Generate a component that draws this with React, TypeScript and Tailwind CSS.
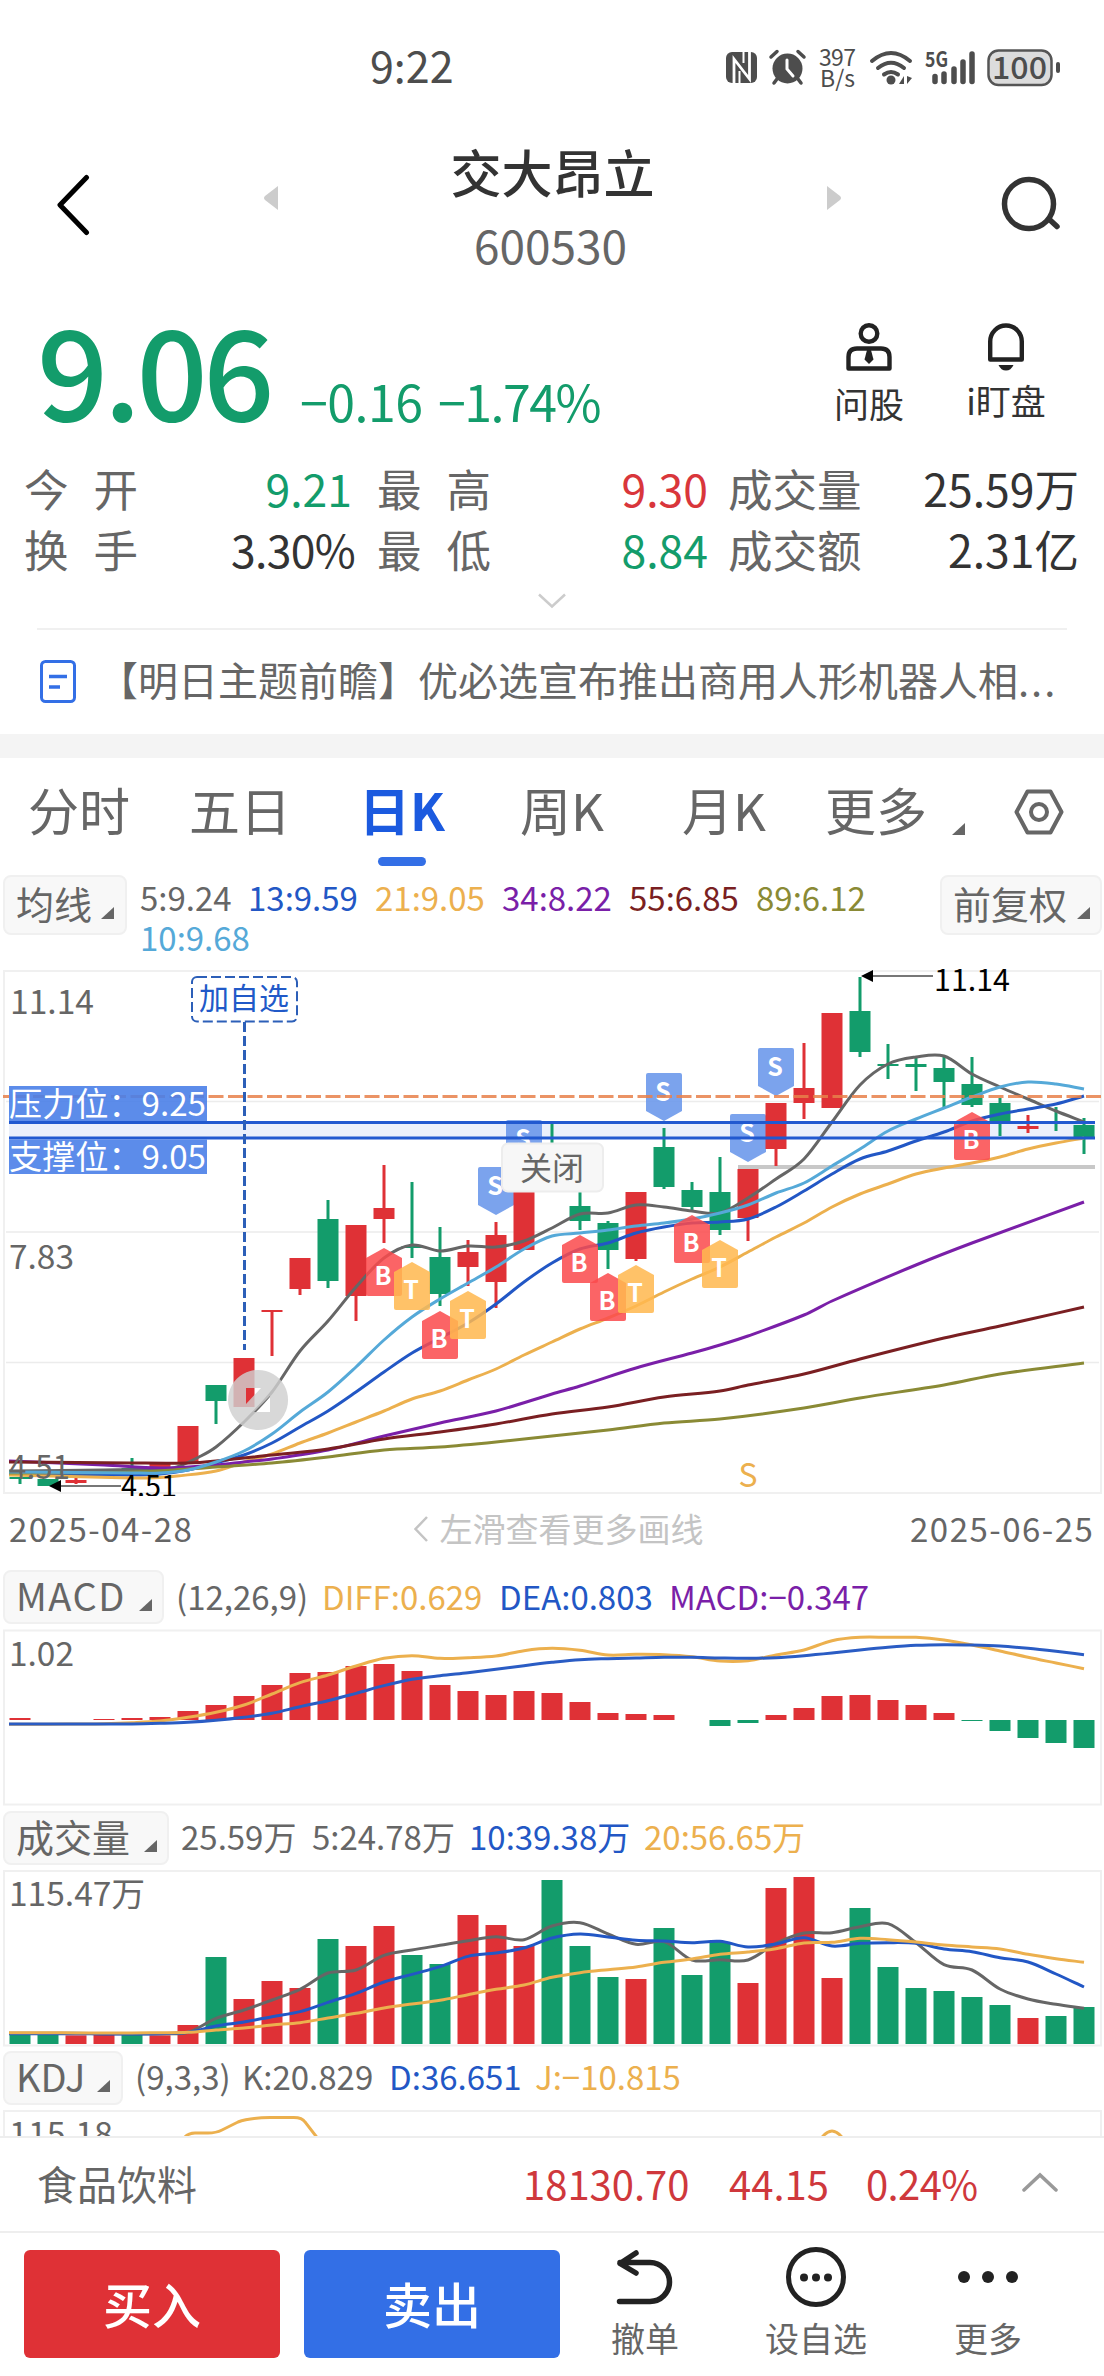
import type { ReactNode } from 'react';

const RED = '#df3136';
const GREEN = '#139c6b';

type Pt = [number, number];

// candle columns are 28px apart, first one centered on x=20
const cx = (i: number) => 20 + i * 28;

// [high, bodyTop, bodyBottom, low, up(1) / down(0)]
const candles: [number, number, number, number, number][] = [
  [1477, 1477, 1479, 1484, 0],
  [1479, 1479, 1486, 1486, 0],
  [1478, 1480, 1483, 1484, 1],
  [1476, 1476, 1478, 1478, 1],
  [1458, 1468, 1470, 1474, 0],
  [1464, 1464, 1468, 1468, 1],
  [1426, 1426, 1464, 1464, 1],
  [1385, 1385, 1401, 1424, 0],
  [1358, 1358, 1407, 1407, 1],
  [1310, 1310, 1312, 1356, 1],
  [1258, 1258, 1289, 1295, 1],
  [1200, 1219, 1281, 1288, 0],
  [1225, 1225, 1296, 1321, 1],
  [1165, 1208, 1219, 1243, 1],
  [1182, 1246, 1248, 1258, 0],
  [1227, 1257, 1294, 1306, 0],
  [1240, 1252, 1267, 1286, 1],
  [1222, 1235, 1282, 1308, 1],
  [1190, 1190, 1250, 1250, 1],
  [1123, 1144, 1146, 1150, 0],
  [1190, 1206, 1221, 1230, 0],
  [1221, 1223, 1250, 1269, 0],
  [1192, 1192, 1259, 1261, 1],
  [1128, 1147, 1187, 1189, 0],
  [1182, 1190, 1207, 1210, 0],
  [1157, 1192, 1230, 1235, 0],
  [1169, 1169, 1218, 1241, 1],
  [1103, 1103, 1149, 1166, 1],
  [1043, 1088, 1103, 1119, 1],
  [1013, 1013, 1108, 1108, 1],
  [977, 1011, 1052, 1057, 0],
  [1044, 1064, 1066, 1079, 0],
  [1057, 1064, 1067, 1091, 0],
  [1057, 1068, 1082, 1107, 0],
  [1057, 1084, 1105, 1107, 0],
  [1098, 1103, 1122, 1136, 0],
  [1115, 1126, 1129, 1133, 1],
  [1107, 1123, 1124, 1131, 0],
  [1118, 1125, 1138, 1154, 0],
];

const ma5: Pt[] = [
  [9, 1471], [104, 1470], [160, 1469], [177, 1467], [199, 1457], [216, 1447], [244, 1422], [272, 1392], [300, 1351],
  [328, 1321], [356, 1287], [384, 1258], [412, 1245], [440, 1251], [468, 1246], [496, 1247], [524, 1241], [552, 1228],
  [580, 1214], [608, 1213], [636, 1205], [664, 1207], [692, 1211], [720, 1213], [748, 1198], [776, 1179], [804, 1159],
  [832, 1122], [860, 1085], [888, 1064], [916, 1057], [944, 1056], [972, 1074], [1000, 1087], [1028, 1099], [1056, 1111], [1084, 1122],
];
const ma10: Pt[] = [
  [9, 1472], [132, 1473], [160, 1473], [188, 1470], [216, 1462], [244, 1451], [272, 1434], [300, 1412], [328, 1392],
  [356, 1367], [384, 1340], [412, 1317], [440, 1299], [468, 1283], [496, 1267], [524, 1249], [552, 1236], [580, 1233],
  [608, 1230], [636, 1226], [664, 1223], [692, 1219], [720, 1213], [748, 1205], [776, 1193], [804, 1183], [832, 1166],
  [860, 1149], [888, 1131], [916, 1119], [944, 1108], [972, 1097], [1000, 1087], [1028, 1082], [1056, 1084], [1084, 1089],
];
const ma13: Pt[] = [
  [9, 1474], [132, 1475], [160, 1474], [188, 1470], [216, 1463], [244, 1455], [272, 1443], [300, 1427], [328, 1411],
  [356, 1392], [384, 1372], [412, 1353], [440, 1338], [468, 1323], [496, 1304], [524, 1282], [552, 1263], [580, 1249],
  [608, 1243], [636, 1233], [664, 1227], [692, 1223], [720, 1222], [748, 1219], [776, 1207], [804, 1191], [832, 1174],
  [860, 1159], [888, 1151], [916, 1141], [944, 1132], [972, 1121], [1000, 1114], [1028, 1109], [1056, 1104], [1084, 1096],
];
const ma21: Pt[] = [
  [9, 1475], [132, 1478], [160, 1477.5], [177, 1476], [216, 1471], [244, 1462], [272, 1454], [300, 1443], [328, 1433],
  [356, 1422], [384, 1411], [412, 1399], [440, 1391], [468, 1380], [496, 1369], [524, 1355], [552, 1342], [580, 1329],
  [608, 1318], [636, 1306], [664, 1292], [692, 1279], [720, 1267], [748, 1252], [776, 1237], [804, 1223], [832, 1207],
  [860, 1194], [888, 1184], [916, 1174], [944, 1168], [972, 1163], [1000, 1157], [1028, 1149], [1056, 1143], [1084, 1138],
];
const ma34: Pt[] = [
  [9, 1461], [104, 1465], [160, 1468], [216, 1465], [244, 1462], [272, 1459], [328, 1450], [384, 1436], [440, 1423],
  [496, 1411], [552, 1394], [580, 1386], [636, 1368], [692, 1353], [720, 1345], [748, 1336], [804, 1315], [832, 1301],
  [916, 1265], [972, 1243], [1084, 1202],
];
const ma55: Pt[] = [
  [9, 1462], [132, 1463], [188, 1463], [216, 1461], [272, 1455], [328, 1449], [384, 1439], [440, 1432], [496, 1424],
  [552, 1414], [608, 1407], [664, 1397], [720, 1391], [748, 1385], [804, 1374], [860, 1359], [944, 1338], [1000, 1326], [1084, 1307],
];
const ma89: Pt[] = [
  [9, 1473], [132, 1472], [188, 1469], [216, 1467], [272, 1463], [328, 1457], [384, 1450], [440, 1447], [496, 1442],
  [552, 1436], [608, 1430], [664, 1423], [720, 1419], [804, 1408], [860, 1398], [944, 1385], [1000, 1374], [1084, 1363],
];

const signals: { type: 'S' | 'B' | 'T'; i: number; y: number }[] = [
  { type: 'S', i: 18, y: 1120 },
  { type: 'S', i: 17, y: 1167 },
  { type: 'S', i: 23, y: 1073 },
  { type: 'S', i: 27, y: 1048 },
  { type: 'S', i: 26, y: 1114 },
  { type: 'B', i: 13, y: 1248 },
  { type: 'T', i: 14, y: 1262 },
  { type: 'B', i: 15, y: 1311 },
  { type: 'T', i: 16, y: 1291 },
  { type: 'B', i: 20, y: 1235 },
  { type: 'B', i: 21, y: 1273 },
  { type: 'T', i: 22, y: 1265 },
  { type: 'B', i: 24, y: 1215 },
  { type: 'T', i: 25, y: 1240 },
  { type: 'B', i: 34, y: 1112 },
];

const macdBars = [
  2, 0, 0, 1, 2, 3, 9, 15, 24, 35, 47, 48, 54, 56, 49, 35, 29, 25, 29, 27, 18, 7, 6, 5, 0, -6, -3, 5, 12, 24, 25, 20, 15,
  7, -1, -11, -18, -23, -28,
];
const diff = [
  523, 523, 522, 521, 518, 513, 502, 487, 465, 432, 398, 375, 348, 325, 317, 325, 323, 318, 302, 295, 301, 315, 313, 314,
  320, 333, 332, 315, 300, 272, 262, 262, 262, 270, 285, 303, 322, 339, 356,
];
const dea = [
  522, 522, 522, 522, 522, 520, 517, 511, 502, 490, 470, 452, 430, 407, 388, 377, 368, 358, 347, 337, 329, 326, 324, 322,
  322, 324, 325, 323, 317, 309, 300, 292, 286, 284, 285, 288, 295, 304, 314,
];

const volTops = [
  703, 703, 706, 703, 703, 706, 675, 471, 597, 543, 564, 417, 438, 378, 465, 492, 345, 375, 438, 240, 438, 531, 537, 384,
  525, 426, 549, 264, 231, 534, 324, 501, 564, 573, 591, 615, 654, 648, 621,
];
const volColors = 'ggrrgrrgrrrgrrggrrrgggrgggrrrrggggggrgg';
const vol5 = [
  700, 700, 700, 701, 701, 701, 697, 655, 630, 600, 568, 519, 510, 466, 450, 436, 422, 410, 419, 378, 368, 402, 433, 425,
  480, 479, 480, 430, 399, 398, 380, 371, 428, 494, 510, 567, 597, 613, 625,
];
const vol10 = [
  701, 701, 701, 702, 702, 701, 697, 678, 666, 650, 635, 607, 580, 546, 523, 500, 469, 459, 444, 414, 402, 411, 421, 423,
  428, 424, 441, 432, 413, 438, 430, 428, 430, 447, 455, 473, 486, 522, 561,
];
const vol20 = [
  698, 698, 699, 699, 699, 698, 697, 690, 684, 675, 668, 654, 640, 624, 612, 601, 584, 568, 555, 532, 518, 509, 501, 487,
  477, 463, 456, 446, 429, 427, 415, 419, 426, 435, 441, 447, 463, 476, 487,
];

const series = (values: number[], top: number): Pt[] => [
  [9, top + values[0] / 3],
  ...values.map((v, i): Pt => [cx(i), top + v / 3]),
];

// soft curve through every point
function curve(pts: Pt[]) {
  let d = `M${pts[0][0]} ${pts[0][1]}`;
  for (let i = 0; i < pts.length - 1; i++) {
    const p0 = pts[i - 1] ?? pts[i];
    const p1 = pts[i];
    const p2 = pts[i + 1];
    const p3 = pts[i + 2] ?? p2;
    const dx = (p2[0] - p1[0]) / 3;
    const s1 = (p2[1] - p0[1]) / (p2[0] - p0[0]);
    const s2 = (p3[1] - p1[1]) / (p3[0] - p1[0]);
    d += `C${p1[0] + dx} ${p1[1] + s1 * dx} ${p2[0] - dx} ${p2[1] - s2 * dx} ${p2[0]} ${p2[1]}`;
  }
  return d;
}

function Line({ pts, color, width = 3 }: { pts: Pt[]; color: string; width?: number }) {
  return <path d={curve(pts)} fill="none" stroke={color} strokeWidth={width} />;
}

function Label({ x, y, w, size = 33, fill = '#666', children }: {
  x: number; y: number; w: number; size?: number; fill?: string; children: string;
}) {
  return (
    <text x={x} y={y} fontSize={size} fill={fill} textLength={w} lengthAdjust="spacingAndGlyphs">
      {children}
    </text>
  );
}

function Signal({ type, x, y }: { type: 'S' | 'B' | 'T'; x: number; y: number }) {
  const fill = type === 'S' ? '#6594ea' : type === 'B' ? '#fa4a4d' : '#ffb84f';
  const d =
    type === 'S'
      ? `M${x - 16} ${y}h32q2 0 2 2v36l-18 10l-18-10v-36q0-2 2-2z`
      : `M${x} ${y}l18 10v36q0 2-2 2h-32q-2 0-2-2v-36z`;
  return (
    <g>
      <path d={d} fill={fill} fillOpacity={0.86} />
      <text x={x - 1} y={type === 'S' ? y + 28 : y + 37} fontSize={25} fontWeight={700} fill="#fff" textAnchor="middle">
        {type}
      </text>
    </g>
  );
}

function Corner() {
  return (
    <svg viewBox="0 0 13 12" className="h-3 w-[13px] shrink-0">
      <path d="M13 0V12H0z" fill="#666" />
    </svg>
  );
}

function Picker({ className, children }: { className: string; children: ReactNode }) {
  return (
    <button
      className={`flex shrink-0 items-center justify-between rounded-lg border-2 border-[#f0f0f0] bg-[#f8f8f8] pl-[11px] text-[38px] leading-none text-[#666] ${className}`}
    >
      <span className="-mt-1 whitespace-nowrap">{children}</span>
      <span className="mt-4">
        <Corner />
      </span>
    </button>
  );
}

function StatusBar() {
  return (
    <div className="flex h-[108px] items-start justify-between pl-[370px] pr-[34px] text-[#4d4d4d]">
      <span className="mt-[43px] text-[43px] leading-none">9:22</span>
      <svg viewBox="720 40 350 60" className="mt-10 h-[60px] w-[350px]" fill="#4d4d4d">
        <rect x="726" y="52" width="31" height="31" rx="6" />
        <path d="M734 84V59l15.500 20V51" fill="none" stroke="#fff" strokeWidth="2.800" />
        <path d="M739.500 71v13M743.500 51v12" fill="none" stroke="#fff" strokeWidth="2" />
        <circle cx="787.500" cy="68.500" r="15" />
        <path d="M771 57l6-5.500M804 57l-6-5.500M777 79l-3 4M798 79l3 4" stroke="#4d4d4d" strokeWidth="3.500" strokeLinecap="round" />
        <path d="M787 60v9l6 7" fill="none" stroke="#fff" strokeWidth="3" strokeLinecap="round" />
        <text x="819" y="66" fontSize="23" textLength="37">397</text>
        <text x="820" y="87" fontSize="23" textLength="35">B/s</text>
        <g fill="none" stroke="#4d4d4d" strokeWidth="4" strokeLinecap="round">
          <path d="M872 61q19-16 38 0M878 68q13-10.500 26 0M884 74.500q7-5 14 0" />
        </g>
        <circle cx="891" cy="80" r="4.500" />
        <path d="M904 76v8h-5zM907 76v8l5-6z" />
        <text x="925" y="67" fontSize="21" fontWeight="700" textLength="23" lengthAdjust="spacingAndGlyphs">5G</text>
        <path
          d="M935 76.500v5M944 74v7.500M954 69v12.500M963 62v19.500M972 54v27.500"
          stroke="#4d4d4d"
          strokeWidth="5.500"
          strokeLinecap="round"
        />
        <rect x="988.500" y="50.500" width="63" height="34.500" rx="10" fill="#dcdcdc" stroke="#555" strokeWidth="2.500" />
        <rect x="1056" y="62" width="4" height="11" rx="2" />
        <text x="992" y="79" fontSize="31" fontWeight="500" textLength="55" lengthAdjust="spacingAndGlyphs">100</text>
      </svg>
    </div>
  );
}

function Header() {
  return (
    <header className="flex h-[202px] items-start pl-[54px] pr-[42px]">
      <svg viewBox="0 0 36 62" className="mt-[66px] h-[62px] w-9">
        <path d="M32.500 3.500L6 31l26.500 27.500" fill="none" stroke="#000" strokeWidth="5" strokeLinecap="round" strokeLinejoin="round" />
      </svg>
      <svg viewBox="0 0 14 24" className="ml-[174px] mt-[78px] h-6 w-3.5">
        <path d="M14 0V24L1 14q-2-2 0-4z" fill="#ccc" />
      </svg>
      <div className="flex w-[549px] flex-col items-center">
        <h1 className="mt-[38px] text-[51px] font-medium leading-none text-[#333]">交大昂立</h1>
        <p className="mr-1 mt-[24px] text-[46px] leading-none text-[#666]">600530</p>
      </div>
      <svg viewBox="0 0 14 24" className="mt-[78px] h-6 w-3.5">
        <path d="M0 0V24L13 14q2-2 0-4z" fill="#ccc" />
      </svg>
      <svg viewBox="0 0 62 58" className="ml-auto mt-[68px] h-[58px] w-[62px]" fill="none" stroke="#333" strokeWidth="5.500" strokeLinecap="round">
        <circle cx="29" cy="28" r="24.500" />
        <path d="M50 44l7 6.500" />
      </svg>
    </header>
  );
}

function Price() {
  return (
    <section className="flex h-[148px] text-[#139c6b]">
      <span className="ml-[37px] mt-[-6px] w-[244px] text-[125px] font-medium leading-none tracking-[-4.500px]">9.06</span>
      <span className="ml-[19px] mt-[65px] w-[138px] whitespace-nowrap text-[50px] leading-none tracking-[-0.5px]">−0.16</span>
      <span className="mt-[65px] whitespace-nowrap text-[50px] leading-none tracking-[-1.500px]">−1.74%</span>
      <div className="ml-auto flex pr-[57px] text-[#333]">
        <div className="flex w-[70px] flex-col items-center">
          <svg viewBox="0 0 46 48" className="mt-[13px] h-12 w-[46px]" fill="none" stroke="#222" strokeWidth="4.400">
            <circle cx="23" cy="10.500" r="8.300" />
            <path d="M2.500 45.500V34q0-8.500 8.500-8.500h24q8.500 0 8.500 8.500v11.500z" strokeLinejoin="round" />
            <path d="M21 27h4l2.500 9.500L23 41l-4.500-4.500z" fill="#222" stroke="none" />
          </svg>
          <span className="mt-[14px] text-[35px] leading-none">问股</span>
        </div>
        <div className="ml-[61px] flex w-[82px] flex-col items-center">
          <svg viewBox="0 0 38 48" className="mt-[13px] h-12 w-[38px]" fill="none" stroke="#222" strokeWidth="4.400" strokeLinejoin="round">
            <path d="M3.200 36.500V18.500a15.800 16 0 0 1 31.600 0v18z" />
            <path d="M11.500 42h15q-2.500 5.500-7.500 5.500t-7.500-5.500z" fill="#222" stroke="none" />
          </svg>
          <span className="mt-[11px] whitespace-nowrap text-[35px] leading-none">i盯盘</span>
        </div>
      </div>
    </section>
  );
}

const quotes = [
  ['今', '开', '9.21', 'text-[#139c6b] pr-[3px]', '最', '高', '9.30', 'text-[#d9363b]', '成交量', '25.59万'],
  ['换', '手', '3.30%', 'text-[#333] tracking-[-0.700px]', '最', '低', '8.84', 'text-[#139c6b]', '成交额', '2.31亿'],
];

function Quotes() {
  return (
    <section className="h-[170px]">
      <div>
        {quotes.map(q => (
          <div key={q[2]} className="flex h-[61px] items-center pl-6 pr-[25px] text-[44.500px] leading-none text-[#666]">
            <span className="flex w-[114px] justify-between"><i className="not-italic">{q[0]}</i><i className="not-italic">{q[1]}</i></span>
            <span className={`w-[217px] text-right ${q[3]}`}>{q[2]}</span>
            <span className="ml-[22px] flex w-[114px] justify-between"><i className="not-italic">{q[4]}</i><i className="not-italic">{q[5]}</i></span>
            <span className={`w-[217px] text-right ${q[7]}`}>{q[6]}</span>
            <span className="ml-5">{q[8]}</span>
            <span className="ml-auto text-[#333]">{q[9]}</span>
          </div>
        ))}
      </div>
      <svg viewBox="0 0 28 16" className="mx-auto mt-[13px] h-4 w-7">
        <path d="M1 1.500l13 12l13-12" fill="none" stroke="#ccc" strokeWidth="2.500" />
      </svg>
    </section>
  );
}

function News() {
  return (
    <section className="h-[106px] px-[37px]">
      <div className="flex h-full items-center border-t-2 border-[#f0f0f0]">
        <svg viewBox="0 0 36 43" className="ml-[3px] mt-[-1px] h-[43px] w-9 shrink-0" fill="none" stroke="#336fe6" strokeWidth="3">
          <rect x="1.500" y="1.500" width="33" height="40" rx="4" />
          <path d="M9 16.500h18M9 27h11" strokeWidth="3.500" />
        </svg>
        <p className="ml-[22px] mt-[-6px] whitespace-nowrap text-[40px] leading-none text-[#666]">
          【明日主题前瞻】优必选宣布推出商用人形机器人相
          <span className="tracking-[2px]">...</span>
        </p>
      </div>
    </section>
  );
}

function Tabs() {
  return (
    <nav className="flex h-[115px] text-[51px] leading-none text-[#666]">
      <span className="ml-[28px] mt-[26px] w-[161px]">分时</span>
      <span className="mt-[26px] w-[170px]">五日</span>
      <span className="flex w-[161px] flex-col text-[#1b5adf]">
        <b className="mt-[26px] font-bold">日K</b>
        <i className="ml-[19px] mt-[22px] h-[9px] w-12 rounded-full bg-[#336fe6]" />
      </span>
      <span className="mt-[26px] w-[162px]">周K</span>
      <span className="mt-[26px] w-[143px]">月K</span>
      <span className="mt-[26px] w-[127px]">更多</span>
      <span className="mt-[65px]"><Corner /></span>
      <svg viewBox="0 0 50 46" className="ml-[49px] mt-[31px] h-[46px] w-[50px]" fill="none" stroke="#666" strokeWidth="4">
        <path d="M13.500 2.500h23L47.500 23l-11 20.500h-23L2.500 23z" strokeLinejoin="round" />
        <circle cx="25" cy="23" r="8" />
      </svg>
    </nav>
  );
}

function KLine() {
  return (
    <svg viewBox="0 966 1104 530" className="block h-[530px] w-[1104px]">
      <rect x="4" y="971" width="1097" height="522" fill="#fff" stroke="#f0f0f0" strokeWidth="2" />
      <path d="M6 1101.500H1099M6 1232H1099M6 1362.500H1099" stroke="#ececec" strokeWidth="1.500" />
      <rect x="9" y="1122" width="1086" height="16" fill="#ebf0fb" />
      <rect x="738" y="1165" width="357" height="4" fill="#c8c8c8" />
      {signals.filter(s => s.type === 'S').map(s => (
        <Signal key={s.i} type={s.type} x={cx(s.i)} y={s.y} />
      ))}
      {candles.map(([hi, top, bottom, lo, up], i) => (
        <g key={i} fill={up ? RED : GREEN}>
          <rect x={cx(i) - 1.5} y={hi} width="3" height={lo - hi} />
          <rect x={cx(i) - 10.5} y={top} width="21" height={bottom - top} />
        </g>
      ))}
      <Line pts={ma5} color="#666" />
      <Line pts={ma13} color="#2257c5" />
      <Line pts={ma21} color="#ecb04e" />
      <Line pts={ma34} color="#7a1fa8" />
      <Line pts={ma55} color="#7a1f22" />
      <Line pts={ma89} color="#8a8a35" />
      <Line pts={ma10} color="#55a9d8" />
      {signals.filter(s => s.type !== 'S').map(s => (
        <Signal key={s.i} type={s.type} x={cx(s.i)} y={s.y} />
      ))}

      <path d="M3 1096.500H1101" stroke="#e8804a" strokeOpacity="0.850" strokeWidth="3" strokeDasharray="15 4.500" strokeDashoffset="9" />
      <path d="M9 1122.500H1095M9 1138H1095" stroke="#2159d0" strokeWidth="3" />
      <rect x="9" y="1086" width="198" height="35" fill="#4a80e8" fillOpacity="0.900" />
      <rect x="9" y="1139.500" width="198" height="34.500" fill="#4a80e8" fillOpacity="0.900" />
      <Label x={9} y={1116} w={197} fill="#fff">压力位：9.25</Label>
      <Label x={9} y={1168.500} w={197} fill="#fff">支撑位：9.05</Label>

      <g fill="none" stroke="#2c5fb8">
        <rect x="192" y="977" width="105" height="44.500" rx="5" strokeWidth="2" strokeDasharray="10 4" />
        <path d="M244.500 1022V1350" strokeWidth="3" strokeDasharray="10 4" />
      </g>
      <Label x={199} y={1009} w={90} size={30} fill="#2159c8">加自选</Label>

      <Label x={10} y={1013.500} w={84}>11.14</Label>
      <Label x={9} y={1269} w={65}>7.83</Label>
      <Label x={9} y={1479} w={61}>4.51</Label>
      <path d="M872 976H933M59 1486H121" stroke="#777" strokeWidth="2" />
      <path d="M861 976l12-6v12zM49 1486l12-6v12z" fill="#000" />
      <Label x={934} y={991} w={76} size={30} fill="#000">11.14</Label>
      <Label x={121} y={1497} w={56} size={30} fill="#000">4.51</Label>
      <Label x={738.5} y={1487} w={19} fill="#ecb04e">S</Label>

      <path
        d="M258 1370a30 30 0 1 0 .1 0zM246 1388h15l-15 16zM270 1396v16h-16z"
        fill="#cfcfcf"
        fillOpacity="0.820"
        fillRule="evenodd"
      />

      <rect x="502" y="1143.500" width="101" height="48" rx="6" fill="#f7f7f7" stroke="#ededed" strokeWidth="2" />
      <Label x={520} y={1180} w={64} size={32}>关闭</Label>
    </svg>
  );
}

function Macd() {
  return (
    <svg viewBox="0 1629 1104 178" className="block h-[178px] w-[1104px]">
      <rect x="4" y="1630.500" width="1097" height="174" fill="#fff" stroke="#f0f0f0" strokeWidth="2" />
      {macdBars.map((v, i) => (
        <rect key={i} x={cx(i) - 10.5} y={v > 0 ? 1720 - v : 1720} width="21" height={Math.abs(v)} fill={v > 0 ? RED : GREEN} />
      ))}
      <Line pts={series(diff, 1550)} color="#ecb04e" />
      <Line pts={series(dea, 1550)} color="#2a5cc4" />
      <Label x={9} y={1666} w={65}>1.02</Label>
    </svg>
  );
}

function Volume() {
  return (
    <svg viewBox="0 1869 1104 178" className="block h-[178px] w-[1104px]">
      <rect x="4" y="1871" width="1097" height="174.500" fill="#fff" stroke="#f0f0f0" strokeWidth="2" />
      {volTops.map((v, i) => (
        <rect key={i} x={cx(i) - 10.5} y={1800 + v / 3} width="21" height={244 - v / 3} fill={volColors[i] === 'r' ? RED : GREEN} />
      ))}
      <Line pts={series(vol5, 1800)} color="#666" />
      <Line pts={series(vol10, 1800)} color="#2257c5" />
      <Line pts={series(vol20, 1800)} color="#ecb04e" />
      <Label x={9} y={1906} w={136}>115.47万</Label>
    </svg>
  );
}

function Kdj() {
  return (
    <svg viewBox="0 2109 1104 27" className="block h-[27px] w-[1104px]">
      <path d="M4 2140V2111H1101V2140" fill="#fff" stroke="#f0f0f0" strokeWidth="2" />
      <Label x={9} y={2146} w={104}>115.18</Label>
      <path
        d="M184 2138Q188 2133 195 2133H208Q216 2133 222 2130L238 2122Q248 2118 270 2117.500H292Q302 2117 305 2122L319 2140M820 2140Q832 2122 844 2140"
        fill="none"
        stroke="#ecb04e"
        strokeWidth="3"
      />
    </svg>
  );
}

function App() {
  return (
    <div className="h-[2376px] w-[1104px] overflow-hidden bg-white font-['Noto_Sans_CJK_SC','Noto_Sans',sans-serif]">
      <StatusBar />
      <Header />
      <Price />
      <Quotes />
      <News />
      <div className="h-[24px] bg-[#f4f4f4]" />
      <Tabs />

      <div className="flex h-[93px] items-start pl-[3px] pr-0.5 pt-0.5">
        <Picker className="h-[60px] w-[124px] pr-[11px]">均线</Picker>
        <div className="ml-[13px] mt-[2px] h-[80px] flex-1 text-[33px] leading-[40px]">
          <div className="flex whitespace-nowrap">
            <span className="w-[108px] text-[#666]">5:9.24</span>
            <span className="w-[127px] text-[#2257c5]">13:9.59</span>
            <span className="w-[127px] text-[#ecb04e]">21:9.05</span>
            <span className="w-[127px] text-[#7a1fa8]">34:8.22</span>
            <span className="w-[127px] text-[#7a1f22]">55:6.85</span>
            <span className="w-[127px] text-[#8a8a35]">89:6.12</span>
          </div>
          <span className="text-[#55a9d8]">10:9.68</span>
        </div>
        <Picker className="h-[60px] w-[162px] pr-[10px]">前复权</Picker>
      </div>

      <KLine />
      <div className="flex h-[74px] items-start justify-between px-[9px] pt-[16px] text-[33px] leading-none text-[#666]">
        <span className="w-[198px] tracking-[1.500px]">2025-04-28</span>
        <span className="flex items-center text-[#c4c4c4]">
          <svg viewBox="0 0 14 26" className="mr-3 h-[26px] w-3.5">
            <path d="M13 1L1.500 13L13 25" fill="none" stroke="#c4c4c4" strokeWidth="2.500" />
          </svg>
          左滑查看更多画线
        </span>
        <span className="w-[185px] tracking-[1.500px]">2025-06-25</span>
      </div>

      <div className="flex h-[59px] items-start pl-[3px] text-[33px]">
        <Picker className="h-[54px] w-[161px] pr-2.5 tracking-[1.500px]">MACD</Picker>
        <div className="ml-[12px] mt-[6px] flex whitespace-nowrap leading-[40px]">
          <span className="w-[146px] text-[#666]">(12,26,9)</span>
          <span className="w-[177px] text-[#ecb04e]">DIFF:0.629</span>
          <span className="w-[170px] text-[#2257c5]">DEA:0.803</span>
          <span className="text-[#7a1fa8]">MACD:−0.347</span>
        </div>
      </div>
      <Macd />

      <div className="flex h-[62px] items-start pl-[3px] pt-1 text-[33px]">
        <Picker className="h-[54px] w-[166px] pr-[10px]">成交量</Picker>
        <div className="ml-[12px] mt-[5px] flex whitespace-nowrap leading-[40px]">
          <span className="w-[131px] text-[#666]">25.59万</span>
          <span className="w-[157px] text-[#666]">5:24.78万</span>
          <span className="w-[175px] text-[#2257c5]">10:39.38万</span>
          <span className="text-[#ecb04e]">20:56.65万</span>
        </div>
      </div>
      <Volume />

      <div className="flex h-[62px] items-start pl-[3px] pt-1 text-[33px]">
        <Picker className="h-[54px] w-[120px] pr-[11px]">KDJ</Picker>
        <div className="ml-[12px] mt-[5px] flex whitespace-nowrap leading-[40px]">
          <span className="w-[107px] text-[#666]">(9,3,3)</span>
          <span className="w-[147px] text-[#666]">K:20.829</span>
          <span className="w-[146px] text-[#2257c5]">D:36.651</span>
          <span className="text-[#ecb04e]">J:−10.815</span>
        </div>
      </div>
      <Kdj />

      <div className="flex h-[95px] items-center border-t-2 border-[#eee] pb-1 pl-[37px] pr-[46px] text-[40px] leading-none text-[#666]">
        <span className="flex-1">食品饮料</span>
        <span className="flex text-[#cf383c]">
          <span className="w-[206px]">18130.70</span>
          <span className="w-[137px]">44.15</span>
          <span className="w-[156px] tracking-[-0.600px]">0.24%</span>
        </span>
        <svg viewBox="0 0 36 20" className="-mt-0.5 h-5 w-9">
          <path d="M2 18L18 3l16 15" fill="none" stroke="#999" strokeWidth="3.500" strokeLinecap="round" />
        </svg>
      </div>

      <footer className="flex h-[145px] items-start border-t-2 border-[#eee] pl-6 text-[34px] leading-none text-[#666]">
        <button className="mt-[17px] h-[108px] w-64 rounded-md bg-[#df3136] pb-1 text-[49px] font-medium leading-none text-white">买入</button>
        <button className="ml-6 mt-[17px] h-[108px] w-64 rounded-md bg-[#336fe6] pb-1 text-[49px] font-medium leading-none text-white">卖出</button>
        <div className="ml-[30px] flex w-[110px] flex-col items-center">
          <svg viewBox="0 0 58 56" className="mt-4 h-14 w-[58px]" fill="none" stroke="#222" strokeWidth="5.500" strokeLinecap="round" strokeLinejoin="round">
            <path d="M20 4L4 14.500L20 24M4 13.500h30a19.500 19.500 0 0 1 0 39H3.500" />
          </svg>
          <span className="mt-[16px]">撤单</span>
        </div>
        <div className="ml-[61px] flex w-[110px] flex-col items-center">
          <svg viewBox="0 0 60 60" className="mt-3.5 size-[60px]">
            <circle cx="30" cy="30" r="27.500" fill="none" stroke="#222" strokeWidth="5" />
            <g fill="#222"><circle cx="18" cy="30.500" r="4" /><circle cx="30" cy="30.500" r="4" /><circle cx="42" cy="30.500" r="4" /></g>
          </svg>
          <span className="mt-[14px]">设自选</span>
        </div>
        <div className="ml-[62px] flex w-[110px] flex-col items-center">
          <svg viewBox="0 0 60 60" className="mt-3.5 size-[60px]" fill="#222">
            <circle cx="6" cy="30" r="6" /><circle cx="30" cy="30" r="6" /><circle cx="54" cy="30" r="6" />
          </svg>
          <span className="mt-[14px]">更多</span>
        </div>
      </footer>
    </div>
  );
}

export default App;
